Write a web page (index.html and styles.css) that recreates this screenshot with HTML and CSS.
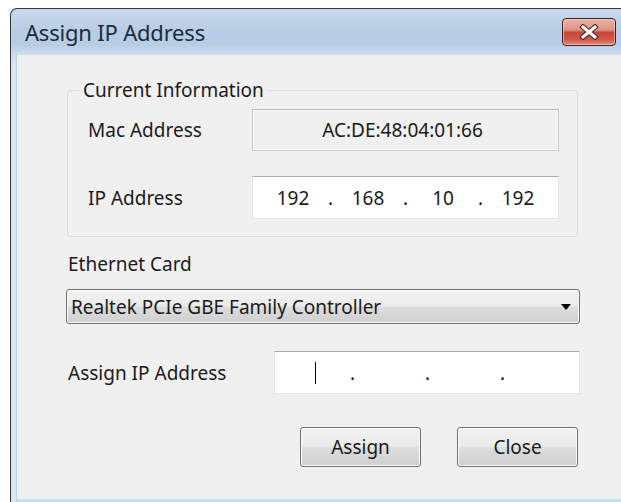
FILE: index.html
```html
<!DOCTYPE html>
<html lang="en">
<head>
<meta charset="utf-8">
<title>Assign IP Address</title>
<link rel="stylesheet" href="styles.css">
</head>
<body>
<div class="window">
  <div class="titlebar">
    <span class="title">Assign IP Address</span>
    <button class="close-btn" aria-label="Close">
      <svg width="20" height="16" viewBox="0 0 20 16">
        <path d="M4 3 L16 13 M16 3 L4 13" stroke="#4a2a28" stroke-width="5.2" stroke-linecap="square"/>
        <path d="M4 3 L16 13 M16 3 L4 13" stroke="#ffffff" stroke-width="3" stroke-linecap="square"/>
      </svg>
    </button>
  </div>
  <div class="client">
    <fieldset class="group">
      <legend>Current Information</legend>
      <div class="row">
        <span class="label">Mac Address</span>
        <div class="field readonly">AC:DE:48:04:01:66</div>
      </div>
      <div class="row">
        <span class="label">IP Address</span>
        <div class="field ip">
          <span class="seg">192</span><span class="dot">.</span>
          <span class="seg">168</span><span class="dot">.</span>
          <span class="seg">10</span><span class="dot">.</span>
          <span class="seg">192</span>
        </div>
      </div>
    </fieldset>

    <div class="section">
      <div class="label">Ethernet Card</div>
      <div class="combo">
        <span>Realtek PCIe GBE Family Controller</span>
        <span class="arrow"></span>
      </div>
    </div>

    <div class="assign-row">
      <span class="label">Assign IP Address</span>
      <div class="field ip wide">
        <span class="seg"><span class="caret"></span></span><span class="dot">.</span>
        <span class="seg"></span><span class="dot">.</span>
        <span class="seg"></span><span class="dot">.</span>
        <span class="seg"></span>
      </div>
    </div>

    <div class="buttons">
      <button class="btn">Assign</button>
      <button class="btn">Close</button>
    </div>
  </div>
</div>
</body>
</html>
```

FILE: styles.css
```css
html, body {
  margin: 0;
  padding: 0;
  height: 502px;
  overflow: hidden;
  background: #ffffff;
}

body {
  font-family: "Noto Sans", "Open Sans", sans-serif;
  font-size: 19px;
  color: #1a1a1a;
}

/* dialog frame */
.window {
  margin: 8px 0 0 10px;
  width: 660px;
  height: 494px;
  border: 1px solid #2f3843;
  border-right: none;
  border-bottom: none;
  border-radius: 7px 0 0 0;
  background: linear-gradient(180deg, #c9d9eb 0px, #b9cee6 20px, #b7cde5 36px, #cfdeee 46px, #dbe6f1 60px, #dbe6f1 100%);
  display: flex;
  flex-direction: column;
  box-sizing: border-box;
}

.titlebar {
  height: 46px;
  display: flex;
  align-items: center;
  justify-content: space-between;
  padding-left: 14px;
  flex: none;
}

.title {
  font-size: 22px;
  color: #1e2b3a;
  letter-spacing: -0.2px;
}

.close-btn {
  width: 54px;
  height: 28px;
  margin-right: 54px;
  border: 1px solid #3d1f1d;
  border-radius: 4px;
  background: linear-gradient(180deg, #eab4a8 0%, #dc9384 42%, #c7463a 52%, #cf5a48 80%, #e2907c 100%);
  box-shadow: inset 0 0 0 1px rgba(255, 220, 210, 0.55);
  padding: 0;
  display: flex;
  align-items: center;
  justify-content: center;
}

.client {
  flex: 1;
  margin-left: 5px;
  border-left: 1px solid #c3d0dd;
  background: #f0f0f0;
  padding: 22px 0 0 49px;
  border-bottom: 3px solid #bfe3f3;
  box-sizing: border-box;
  width: 640px;
}

/* group box */
.group {
  margin: 0 0 0 1px;
  width: 511px;
  box-sizing: border-box;
  border: 1px solid #d6dde3;
  border-radius: 3px;
  padding: 6px 18px 17px 20px;
}

.group legend {
  padding: 0 3px;
  margin-left: -8px;
  line-height: 26px;
}

.row {
  display: flex;
  align-items: center;
}

.row + .row {
  margin-top: 25px;
}

.row .label {
  width: 164px;
}

.field {
  box-sizing: border-box;
  width: 307px;
  height: 42px;
}

.readonly {
  border: 1px solid #c9c9c9;
  border-top-color: #b8b8b8;
  box-shadow: inset 0 0 0 1px #f8f8f8;
  display: flex;
  align-items: center;
  justify-content: center;
  padding-right: 6px;
}

.ip {
  height: 43px;
  background: #ffffff;
  border: 1px solid #e2e7ec;
  border-top-color: #abadb3;
  display: flex;
  align-items: center;
  padding-left: 6px;
}

.ip .seg {
  width: 68px;
  text-align: center;
  display: flex;
  justify-content: center;
  align-items: center;
  height: 26px;
}

.ip .dot {
  width: 7px;
  text-align: center;
}

.caret {
  width: 1px;
  height: 22px;
  background: #000;
}

.wide {
  width: 306px;
}

/* ethernet card */
.section {
  margin-top: 14px;
}

.section .label {
  padding-left: 2px;
  line-height: 26px;
}

.combo {
  margin-top: 12px;
  width: 514px;
  height: 35px;
  box-sizing: border-box;
  border: 1px solid #707070;
  border-radius: 3px;
  background: linear-gradient(180deg, #f2f2f2 0%, #ebebeb 48%, #dddddd 52%, #cfcfcf 100%);
  box-shadow: inset 0 0 0 1px #fafafa;
  display: flex;
  align-items: center;
  justify-content: space-between;
  padding: 0 8px 0 4px;
}

.arrow {
  width: 0;
  height: 0;
  border-left: 5px solid transparent;
  border-right: 5px solid transparent;
  border-top: 6px solid #000;
}

/* new address */
.assign-row {
  margin-top: 27px;
  width: 514px;
  display: flex;
  align-items: center;
  justify-content: space-between;
}

.assign-row .label {
  padding-left: 2px;
}

/* dialog buttons */
.buttons {
  margin-top: 33px;
  width: 512px;
  display: flex;
  justify-content: flex-end;
  gap: 36px;
}

.btn {
  width: 121px;
  height: 40px;
  font-family: inherit;
  font-size: 19px;
  color: #1a1a1a;
  border: 1px solid #707070;
  border-radius: 3px;
  background: linear-gradient(180deg, #f2f2f2 0%, #ebebeb 48%, #dddddd 52%, #cfcfcf 100%);
  box-shadow: inset 0 0 0 1px #fbfbfb;
  padding: 0;
}
```
